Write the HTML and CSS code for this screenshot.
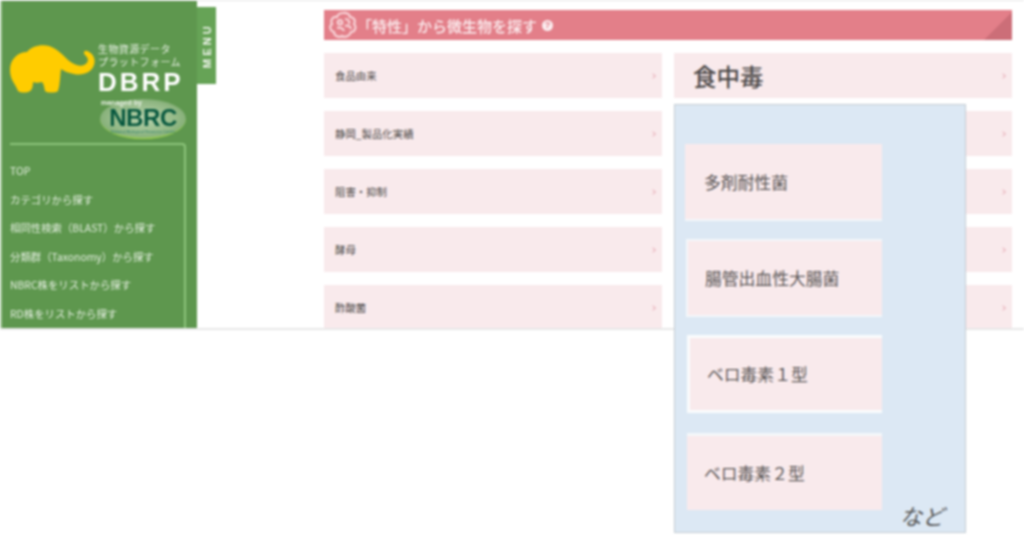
FILE: index.html
```html
<!DOCTYPE html>
<html lang="ja">
<head>
<meta charset="utf-8">
<title>DBRP</title>
<link rel="stylesheet" href="styles.css">
</head>
<body>
<div class="stage">
  <div class="shot">
    <aside class="sidebar">
      <div class="brand">
        <svg class="elephant" viewBox="0 0 86 50" aria-hidden="true">
          <path fill="#ffcc00" d="M1 26C1 15 9 8 18 8C22 3 31 0 40 2C47 4 53 10 59 16C64 20 70 23 75 21C80 19 80 14 76 11C74 9 75 6 78 7C84 9 87 15 85 21C83 28 74 32 65 30C59 29 55 27 52 25C51 33 51 41 49 47C47 49 38 49 36 47C35 43 35 40 33 38C30 39 26 39 24 38C24 42 23 46 21 47C18 49 12 49 9 47C7 41 1 36 1 26Z"/>
        </svg>
        <div class="brand-text">
          <div class="brand-sub">生物資源データ<br>プラットフォーム</div>
          <div class="brand-name">DBRP</div>
        </div>
      </div>
      <div class="nbrc">
        <div class="nbrc-oval">
          <div class="nbrc-by">managed by</div>
          <span class="nbrc-name">NBRC</span>
          <div class="nbrc-foot">National Biological Resource Center</div>
        </div>
      </div>
      <nav class="nav">
        <a>TOP</a>
        <a>カテゴリから探す</a>
        <a>相同性検索（BLAST）から探す</a>
        <a>分類群（Taxonomy）から探す</a>
        <a>NBRC株をリストから探す</a>
        <a>RD株をリストから探す</a>
      </nav>
    </aside>
    <div class="menu-tab"><span>MENU</span></div>
    <main class="main">
      <h2 class="heading">
        <svg class="gear" viewBox="0 0 28 28" aria-hidden="true">
          <g fill="none" stroke="#f8d3d7" stroke-width="2.2">
            <path d="M14 2C18 1 21 4 21 6C25 6 27 10 25 13C28 16 26 21 22 21C21 25 16 27 13 25C10 27 5 25 5 21C1 20 0 15 3 13C1 9 4 5 8 6C9 3 12 2 14 2Z"/>
            <path d="M9 10C12 8 14 10 13 13C10 14 8 13 9 10Z"/>
            <path d="M16 8C19 8 21 10 20 13"/>
            <path d="M8 17C11 16 14 17 15 20"/>
            <path d="M16 15C19 14 21 15 22 18"/>
          </g>
        </svg>
        <span>「特性」から微生物を探す</span>
        <span class="help">?</span>
      </h2>
      <div class="grid">
        <a class="cell">食品由来<i class="chev"></i></a>
        <a class="cell cell-big">食中毒<i class="chev"></i></a>
        <a class="cell">静岡_製品化実績<i class="chev"></i></a>
        <a class="cell"><i class="chev"></i></a>
        <a class="cell">阻害・抑制<i class="chev"></i></a>
        <a class="cell"><i class="chev"></i></a>
        <a class="cell">酵母<i class="chev"></i></a>
        <a class="cell"><i class="chev"></i></a>
        <a class="cell">酢酸菌<i class="chev"></i></a>
        <a class="cell"><i class="chev"></i></a>
      </div>
    </main>
  </div>
  <div class="popup">
    <div class="pop-item pop-a">多剤耐性菌</div>
    <div class="pop-item pop-b">腸管出血性大腸菌</div>
    <div class="pop-item pop-c">ベロ毒素１型</div>
    <div class="pop-item pop-d">ベロ毒素２型</div>
    <div class="pop-more">など</div>
  </div>
</div>
</body>
</html>
```

FILE: styles.css
```css
* { box-sizing: border-box; }
html, body { margin: 0; padding: 0; background: #fff; overflow: hidden; }
body { width: 1024px; height: 546px; font-family: "Noto Sans CJK JP", "Noto Sans", sans-serif; }
.stage { position: relative; width: 1024px; height: 546px; filter: blur(0.8px); }
.shot {
  display: flex;
  height: 330px;
  overflow: hidden;
  border-top: 1px solid #e4e4e4;
  border-bottom: 2px solid #e8e8e8;
}
.sidebar {
  flex: 0 0 197px;
  background: #5e974e;
  border-left: 2px solid #a9c9a0;
  display: flex;
  flex-direction: column;
  color: #fff;
}
.brand { display: flex; margin: 41px 0 0 7px; height: 54px; }
.elephant { width: 86px; height: 50px; margin-top: 2px; flex: none; }
.brand-text { margin-left: 3px; }
.brand-sub { font-size: 10px; line-height: 13px; letter-spacing: 0.4px; color: #e8f0e4; white-space: nowrap; }
.brand-name { font: 700 26px/26px "Liberation Sans", sans-serif; letter-spacing: 3px; margin-top: 1px; }
.nbrc { margin: 4px 0 0 98px; height: 42px; width: 86px; }
.nbrc-oval {
  position: relative;
  width: 86px; height: 40px;
  border-radius: 50%;
  background: radial-gradient(ellipse at center, #b9d3ae 0%, #94b987 55%, #6c9f5d 100%);
  border-bottom: 1px solid #a5d94a;
  display: flex; flex-direction: column; align-items: center;
}
.nbrc-by { font: 700 7px/8px "Liberation Sans", sans-serif; color: #e9f0e5; align-self: flex-start; margin: 0 0 0 1px; }
.nbrc-name { font: 700 24px/22px "Liberation Sans", sans-serif; color: #08583f; letter-spacing: -0.4px; }
.nbrc-foot { font: 4px/6px "Liberation Sans", sans-serif; color: #2f7f6c; white-space: nowrap; }
.nav {
  margin: 4px 0 0 8px;
  width: 176px;
  height: 200px;
  border: 2px solid #8cc47a;
  border-bottom: 0;
  border-left: 0;
  border-radius: 0 4px 0 0;
  padding-top: 12px;
  display: flex;
  flex-direction: column;
}
.nav a { font-size: 10.4px; line-height: 28.5px; height: 28.5px; color: #e4eee0; white-space: nowrap; }
.menu-tab {
  flex: none;
  width: 19px;
  height: 77px;
  margin-top: 6px;
  background: #66a356;
  color: #f1f6ee;
  display: flex;
  align-items: center;
  justify-content: center;
}
.menu-tab span { writing-mode: vertical-rl; transform: rotate(180deg); font: 700 11px/12px "Liberation Sans", sans-serif; letter-spacing: 3.2px; }
.main { flex: none; width: 688px; margin-left: 108px; padding-top: 9px; }
.heading {
  margin: 0;
  position: relative;
  height: 30px;
  background: #e37f89;
  color: #fbeef0;
  display: flex;
  align-items: center;
  font-size: 15px;
  font-weight: 500;
  overflow: hidden;
}
.heading::after {
  content: "";
  position: absolute;
  right: 0; bottom: 0;
  border-style: solid;
  border-width: 0 0 28px 28px;
  border-color: transparent transparent #cc6e78 transparent;
}
.gear { width: 28px; height: 28px; margin: 0 0 0 5px; flex: none; }
.help {
  width: 11px; height: 11px; border-radius: 50%;
  background: #fbeef0; color: #e37f89;
  font: 700 9px/11px "Liberation Sans", sans-serif;
  text-align: center; margin-left: 5px;
}
.grid { display: grid; grid-template-columns: 338px 338px; column-gap: 12px; row-gap: 13px; margin-top: 13px; }
.cell {
  position: relative;
  height: 45px;
  background: #f9eaec;
  color: #4e4a4a;
  font-size: 10.4px;
  display: flex;
  align-items: center;
  padding-left: 11px;
}
.cell-big { font-size: 23.5px; font-weight: 500; padding-left: 19px; }
.chev {
  position: absolute;
  right: 7px; top: 50%;
  width: 4px; height: 4px; margin-top: -2px;
  border-top: 1px solid #eab5bd;
  border-right: 1px solid #eab5bd;
  transform: rotate(45deg);
}
.popup {
  position: absolute;
  left: 674px; top: 104px;
  width: 292px; height: 429px;
  background: #dce8f4;
  border: 1px solid #c4ccd2;
}
.pop-item {
  position: absolute;
  background: #f9eaec;
  border-top: 2px solid #f4f7fa;
  color: #5a5656;
  font-size: 16.8px;
  display: flex;
  align-items: center;
  width: 197px;
  height: 77px;
}
.pop-a { left: 10px; top: 39px; padding-left: 19px; border: 0; border-bottom: 2px solid #f4f7fa; }
.pop-b { left: 11px; top: 134px; width: 196px; height: 78px; padding-left: 17px; border: 2px solid #f4f7fa; border-right: 0; }
.pop-c { left: 12px; top: 230px; width: 195px; height: 78px; padding-left: 17px; border: 3px solid #fafcfd; border-right: 0; }
.pop-d { left: 12px; top: 328px; width: 195px; padding-left: 17px; border-width: 3px 0 0; }
.pop-more { position: absolute; left: 225px; top: 396px; font-size: 22px; line-height: 28px; color: #555; font-style: italic; }
```
